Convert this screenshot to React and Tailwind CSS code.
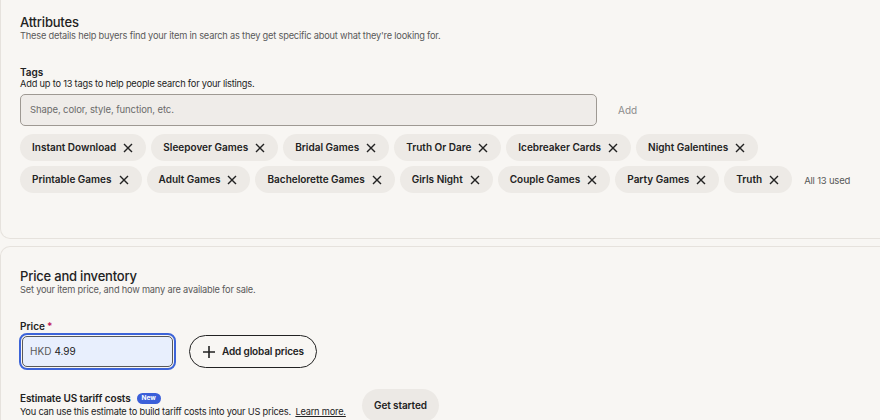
import React from "react";

const TAG_ROWS = [
  ["Instant Download", "Sleepover Games", "Bridal Games", "Truth Or Dare", "Icebreaker Cards", "Night Galentines"],
  ["Printable Games", "Adult Games", "Bachelorette Games", "Girls Night", "Couple Games", "Party Games", "Truth"],
];

function XIcon() {
  return (
    <svg width="10" height="10" viewBox="0 0 10 10" fill="none" stroke="#222" strokeWidth="1.4" strokeLinecap="square">
      <path d="M1.5 1.5l7 7M8.5 1.5l-7 7" />
    </svg>
  );
}

function Tag({ label }) {
  return (
    <div className="flex h-[27px] items-center gap-[7px] rounded-full bg-[#edeae6] pl-3 pr-[13px] text-[10px] font-semibold text-[#222]">
      <span>{label}</span>
      <XIcon />
    </div>
  );
}

export default function App() {
  return (
    <div className="h-[420px] w-[880px] overflow-hidden bg-[#f8f6f3] font-['Inter',sans-serif] text-[#222]">
      {/* Attributes card (top cut off by scroll) */}
      <div className="w-[920px] rounded-b-[10px] border-x border-b border-[#e6e2dd] px-[19px] pt-[14px] pb-[45px]">
        <h2 className="text-[13px] font-medium leading-[16px] tracking-[-0.2px]">Attributes</h2>
        <p className="text-[9.25px] leading-[12px] tracking-[-0.2px] text-[#595959]">
          These details help buyers find your item in search as they get specific about what they're looking for.
        </p>

        <div className="mt-[24px]">
          <div className="text-[10px] font-semibold leading-[12px]">Tags</div>
          <p className="text-[9.25px] leading-[11px] tracking-[-0.2px] text-[#222]">Add up to 13 tags to help people search for your listings.</p>
          <div className="mt-[5px] flex items-center">
            <div className="flex h-[32px] w-[577px] items-center rounded-[5px] border border-[#9e9993] bg-[#efece9] px-[9px] text-[9.5px] tracking-[-0.1px] text-[#6b6b6b]">
              Shape, color, style, function, etc.
            </div>
            <span className="ml-[21px] text-[10px] text-[#8c8c8c]">Add</span>
          </div>

          <div className="mt-[8px] flex flex-col gap-[5px]">
            {TAG_ROWS.map((row, i) => (
              <div key={i} className="flex items-center gap-[5px]">
                {row.map((t) => (
                  <Tag key={t} label={t} />
                ))}
                {i === 1 && <span className="ml-[7px] mt-[4px] text-[9.5px] tracking-[-0.2px] text-[#595959]">All 13 used</span>}
              </div>
            ))}
          </div>
        </div>
      </div>

      {/* Price and inventory card */}
      <div className="mt-[7px] w-[920px] rounded-t-[10px] border-x border-t border-[#e6e2dd] px-[19px] pt-[21px]">
        <h2 className="text-[13px] font-medium leading-[16px] tracking-[-0.2px]">Price and inventory</h2>
        <p className="text-[9.25px] leading-[12px] tracking-[-0.2px] text-[#595959]">Set your item price, and how many are available for sale.</p>

        <div className="mt-[24px] text-[10px] font-semibold leading-[12px]">
          Price<span className="ml-[2px] text-[#c2185b]">*</span>
        </div>
        <div className="mt-[3px] flex items-center">
          <div className="ml-[2px] flex h-[31px] w-[151px] items-center rounded-[5px] border border-[#595959] bg-[#e8effd] px-[7px] text-[10px] outline-2 outline-offset-[1px] outline-[#3d64d8]">
            <span className="text-[#595959]">HKD</span>
            <span className="ml-[3px] text-[#222]">4.99</span>
          </div>
          <button className="ml-[16px] flex h-[33px] items-center gap-[6px] rounded-full border border-[#222] pl-[12px] pr-[12px] text-[10px] font-semibold tracking-[-0.15px]">
            <svg width="14" height="14" viewBox="0 0 14 14" stroke="#222" strokeWidth="1.6">
              <path d="M7 1v12M1 7h12" />
            </svg>
            Add global prices
          </button>
        </div>

        <div className="mt-[23px] flex items-start">
          <div className="w-[342px]">
            <div className="flex items-center gap-[6px] text-[10px] font-semibold leading-[14px] tracking-[-0.1px]">
              Estimate US tariff costs
              <span className="rounded-full bg-[#3b5fd9] px-[5px] text-[6.5px] font-bold leading-[11px] tracking-normal text-white">New</span>
            </div>
            <p className="whitespace-nowrap text-[9.25px] leading-[13px] tracking-[-0.2px] text-[#222]">
              You can use this estimate to build tariff costs into your US prices.{" "}
              <span className="ml-[2px] underline">Learn more.</span>
            </p>
          </div>
          <button className="-mt-[2px] flex h-[33px] items-center rounded-full bg-[#ece9e5] px-[12px] text-[10px] font-semibold tracking-[-0.1px]">
            Get started
          </button>
        </div>
      </div>
    </div>
  );
}
